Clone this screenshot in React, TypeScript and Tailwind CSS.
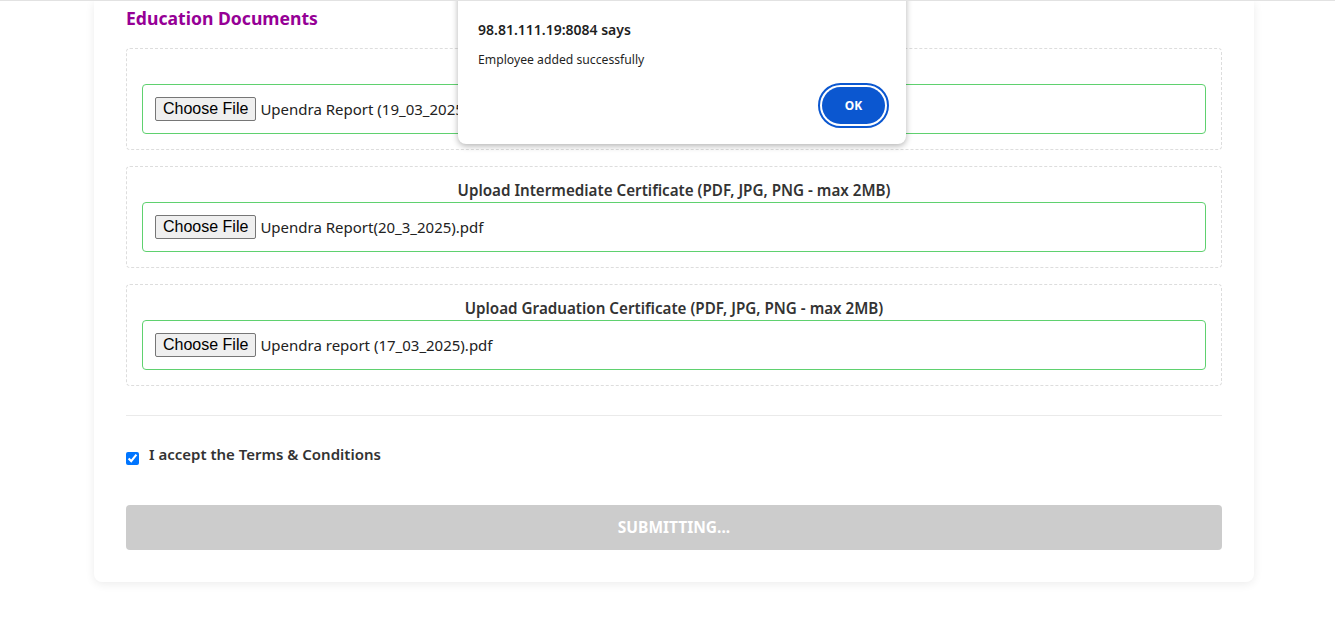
const sans = "font-['Noto_Sans','Open_Sans',sans-serif]";

const docs = [
  { label: "Upload 10th Certificate (PDF, JPG, PNG - max 2MB)", file: "Upendra Report (19_03_2025).pdf" },
  { label: "Upload Intermediate Certificate (PDF, JPG, PNG - max 2MB)", file: "Upendra Report(20_3_2025).pdf" },
  { label: "Upload Graduation Certificate (PDF, JPG, PNG - max 2MB)", file: "Upendra report (17_03_2025).pdf" },
];

function FileField({ label, file }: { label: string; file: string }) {
  return (
    <div className="mb-4 rounded border border-dashed border-[#dddddd] px-[15px] pb-[15px] pt-[12px]">
      <p className="h-[22px] text-center text-[15.2px] font-semibold leading-[22px] text-[#333]">{label}</p>
      <div className="mt-px flex h-[50px] items-center rounded border border-[#5fd16f] pl-3">
        <span className="rounded-[2px] border border-[#767676] bg-[#efefef] px-[7px] font-['Liberation_Sans',Arial,sans-serif] text-[16px] leading-[22px] text-black">
          Choose File
        </span>
        <span className="ml-1 text-[15px] text-[#222]">{file}</span>
      </div>
    </div>
  );
}

export default function App() {
  return (
    <div className={`relative min-h-screen overflow-hidden border-t border-[#e2e2e2] bg-white ${sans}`}>
      <div className="ml-[94px] w-[1160px] rounded-b-lg bg-white px-8 pb-8 pt-[5px] shadow-[0_2px_10px_rgba(0,0,0,0.08)]">
        <h2 className="mb-[18px] text-[17.6px] font-bold leading-[24px] text-[#960096]">Education Documents</h2>
        {docs.map((d) => (
          <FileField key={d.label} label={d.label} file={d.file} />
        ))}
        <hr className="mt-[29px] border-[#eaeaea]" />
        <label className="mt-[27px] flex items-center gap-[10px]">
          <input type="checkbox" defaultChecked className="mt-2 h-[13px] w-[13px] accent-[#0075ff]" />
          <span className="text-[15px] font-semibold leading-[22px] text-[#333]">I accept the Terms &amp; Conditions</span>
        </label>
        <button
          disabled
          className="mt-[40px] flex h-[45px] w-full items-center justify-center rounded bg-[#cccccc] text-[15.5px] font-bold uppercase text-white"
        >
          Submitting...
        </button>
      </div>

      <div className="absolute left-[458px] top-[-20px] h-[163px] w-[448px] rounded-lg bg-white shadow-[0_2px_6px_rgba(0,0,0,0.3)]">
        <div className="px-5 pt-[37px]">
          <p className="text-[14px] font-semibold leading-[24px] text-[#1f1f1f]">98.81.111.19:8084 says</p>
          <p className="mt-[10px] text-[12.2px] leading-[16px] text-[#1f1f1f]">Employee added successfully</p>
        </div>
        <div className="flex justify-end pr-[21px] pt-[19px]">
          <button className="h-[37px] w-[63px] rounded-full bg-[#0b57d0] text-[12px] font-bold text-white ring-2 ring-white outline-2 outline-offset-2 outline-[#0b57d0]">
            OK
          </button>
        </div>
      </div>
    </div>
  );
}
